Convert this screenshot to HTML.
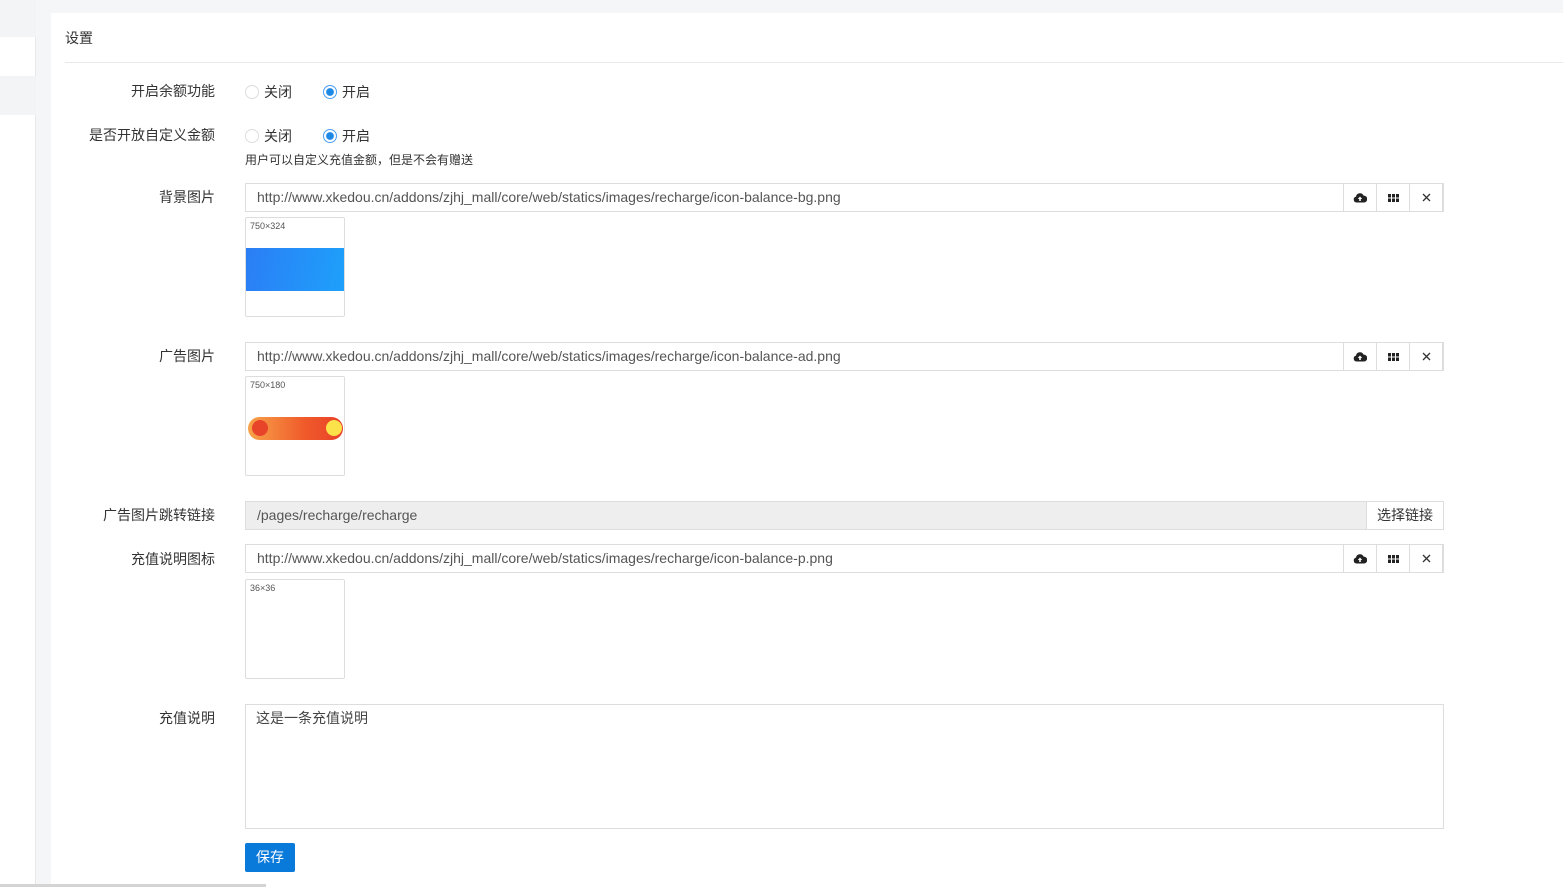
<!DOCTYPE html>
<html><head><meta charset="utf-8"><style>
*{box-sizing:border-box;margin:0;padding:0}
body{width:1563px;height:887px;overflow:hidden;background:#f5f6f8;font-family:"Liberation Sans","Noto Sans CJK SC",sans-serif;font-size:13px;color:#333;position:relative}
.a{position:absolute}
.side{left:0;top:0;width:36px;height:887px;background:#fff;border-right:1px solid #e8e8e8}
.panel{left:51px;top:13px;width:1512px;height:874px;background:#fff}
.lbl{width:180px;left:35px;text-align:right;font-size:14px;color:#333}
.inp{left:245px;width:1199px;height:29px;border:1px solid #ddd;background:#fff;padding:0 11px;line-height:27px;font-size:14px;color:#555}
.btns{right:0;top:-1px;height:29px;display:flex}
.btns div{width:34px;height:29px;border:1px solid #ddd;margin-left:-1px;display:flex;align-items:center;justify-content:center}
.thumb{left:245px;width:100px;height:100px;border:1px solid #ddd;border-radius:2px;background:#fff}
.thumb span{position:absolute;left:4px;top:3px;font-size:9px;color:#555}
.radio{width:14px;height:14px;border-radius:50%;border:1px solid #ddd;display:inline-block}
.on{border:1px solid #4a9ff5;background:radial-gradient(circle,#1e88e5 3.5px,#fff 4.2px)}
.r{font-size:14px;display:flex;align-items:center;gap:5px}
</style></head><body>
<div class="a side"></div>
<div class="a" style="left:0;top:0;width:36px;height:37px;background:#f3f4f6"></div>
<div class="a" style="left:0;top:76px;width:36px;height:39px;background:#f3f4f6"></div>
<div class="a panel"></div>
<div class="a" style="left:65px;top:28px;font-size:14px">设置</div>
<div class="a" style="left:65px;top:62px;width:1498px;height:1px;background:#e9e9e9"></div>

<div class="a lbl" style="top:81px">开启余额功能</div>
<div class="a r" style="left:245px;top:82px"><i class="radio"></i>关闭</div>
<div class="a r" style="left:323px;top:82px"><i class="radio on"></i>开启</div>

<div class="a lbl" style="top:125px">是否开放自定义金额</div>
<div class="a r" style="left:245px;top:126px"><i class="radio"></i>关闭</div>
<div class="a r" style="left:323px;top:126px"><i class="radio on"></i>开启</div>
<div class="a" style="left:245px;top:151px;font-size:12px">用户可以自定义充值金额，但是不会有赠送</div>

<div class="a lbl" style="top:187px">背景图片</div>
<div class="a inp" style="top:183px">http://www.xkedou.cn/addons/zjhj_mall/core/web/statics/images/recharge/icon-balance-bg.png
<div class="a btns"><div><svg width="14" height="11" viewBox="0 0 14 11"><path d="M3.5 10.5A3 3 0 0 1 3 4.6 4 4 0 0 1 10.6 3.6 3.4 3.4 0 0 1 11 10.5Z" fill="#222"/><path d="M7 4.5 9.2 7H7.8V9H6.2V7H4.8Z" fill="#fff"/></svg></div><div><svg width="11" height="8"><rect width="11" height="8" fill="#222"/><path d="M3.5 0V8M7.5 0V8M0 4H11" stroke="#fff"/></svg></div><div><svg width="9" height="9"><path d="M1 1 8 8M8 1 1 8" stroke="#333" stroke-width="1.3"/></svg></div></div></div>
<div class="a thumb" style="top:217px"><span>750×324</span><div class="a" style="left:0;top:30px;width:98px;height:43px;background:linear-gradient(100deg,#2b7ef5,#1ea0fb)"></div></div>

<div class="a lbl" style="top:346px">广告图片</div>
<div class="a inp" style="top:342px">http://www.xkedou.cn/addons/zjhj_mall/core/web/statics/images/recharge/icon-balance-ad.png
<div class="a btns"><div><svg width="14" height="11" viewBox="0 0 14 11"><path d="M3.5 10.5A3 3 0 0 1 3 4.6 4 4 0 0 1 10.6 3.6 3.4 3.4 0 0 1 11 10.5Z" fill="#222"/><path d="M7 4.5 9.2 7H7.8V9H6.2V7H4.8Z" fill="#fff"/></svg></div><div><svg width="11" height="8"><rect width="11" height="8" fill="#222"/><path d="M3.5 0V8M7.5 0V8M0 4H11" stroke="#fff"/></svg></div><div><svg width="9" height="9"><path d="M1 1 8 8M8 1 1 8" stroke="#333" stroke-width="1.3"/></svg></div></div></div>
<div class="a thumb" style="top:376px"><span>750×180</span><div class="a" style="left:2px;top:40px;width:95px;height:23px;border-radius:12px;background:linear-gradient(90deg,#f7a34a,#f05a2a 60%,#e8402a)"></div><div class="a" style="left:80px;top:43px;width:16px;height:16px;border-radius:50%;background:#fbe14a"></div><div class="a" style="left:6px;top:43px;width:16px;height:16px;border-radius:50%;background:#e8442a"></div></div>

<div class="a lbl" style="top:505px">广告图片跳转链接</div>
<div class="a inp" style="top:501px;background:#eee">/pages/recharge/recharge
<div class="a" style="right:-1px;top:-1px;width:78px;height:29px;border:1px solid #ddd;background:#fff;text-align:center;line-height:27px;font-size:14px;color:#333">选择链接</div></div>

<div class="a lbl" style="top:549px">充值说明图标</div>
<div class="a inp" style="top:544px">http://www.xkedou.cn/addons/zjhj_mall/core/web/statics/images/recharge/icon-balance-p.png
<div class="a btns"><div><svg width="14" height="11" viewBox="0 0 14 11"><path d="M3.5 10.5A3 3 0 0 1 3 4.6 4 4 0 0 1 10.6 3.6 3.4 3.4 0 0 1 11 10.5Z" fill="#222"/><path d="M7 4.5 9.2 7H7.8V9H6.2V7H4.8Z" fill="#fff"/></svg></div><div><svg width="11" height="8"><rect width="11" height="8" fill="#222"/><path d="M3.5 0V8M7.5 0V8M0 4H11" stroke="#fff"/></svg></div><div><svg width="9" height="9"><path d="M1 1 8 8M8 1 1 8" stroke="#333" stroke-width="1.3"/></svg></div></div></div>
<div class="a thumb" style="top:579px"><span>36×36</span></div>

<div class="a lbl" style="top:708px">充值说明</div>
<div class="a inp" style="top:704px;height:125px;line-height:1;padding:6px 10px;font-size:14px;color:#444">这是一条充值说明</div>

<div class="a" style="left:245px;top:843px;width:50px;height:29px;background:#0a7ada;border-radius:2px;color:#fff;text-align:center;line-height:29px;font-size:14px">保存</div>
<div class="a" style="left:0;top:884px;width:266px;height:3px;background:#d4d4d4"></div>
</body></html>
